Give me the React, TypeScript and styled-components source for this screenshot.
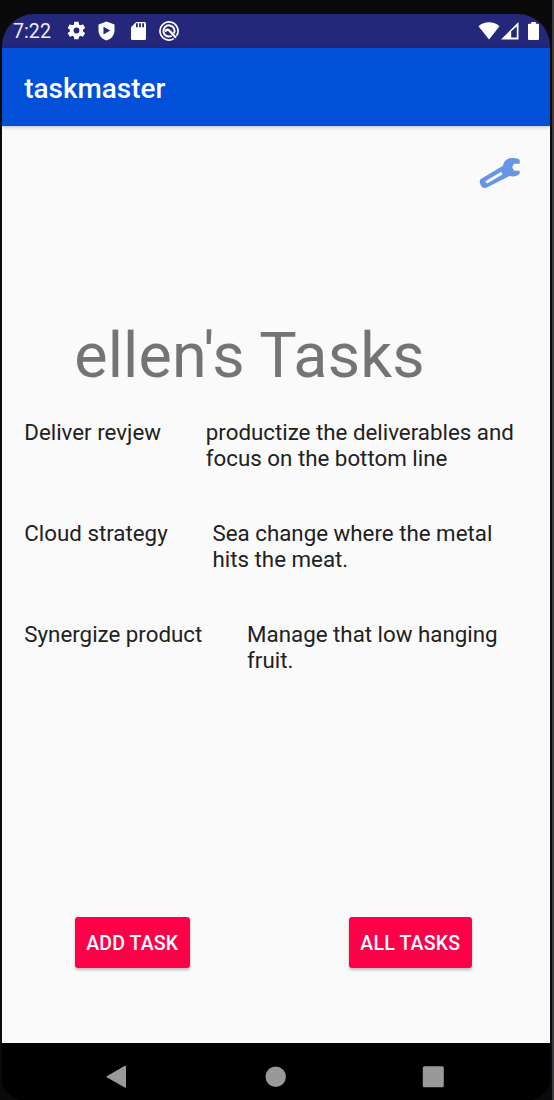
import React from "react";
import styled, { createGlobalStyle } from "styled-components";

const GlobalStyle = createGlobalStyle`
  * { box-sizing: border-box; }
  html, body { margin: 0; padding: 0; background: #0a0a0a; }
  body { font-family: Roboto, sans-serif; overflow: hidden; }
`;

const Device = styled.div`
  width: 554px;
  height: 1100px;
  padding: 14px 2px 0 2px;
  background: #0a0a0a;
  border-right: 2px solid #3b3c42;
`;

const Screen = styled.main`
  width: 548px;
  height: 1086px;
  display: flex;
  flex-direction: column;
  overflow: hidden;
  border-radius: 32px 32px 22px 22px;
  background: #000;
`;

const StatusBar = styled.header`
  height: 33.5px;
  flex: none;
  display: flex;
  align-items: center;
  justify-content: space-between;
  padding: 0 11.5px 0 11px;
  background: #24277a;
  color: #fff;
`;

const StatusGroup = styled.div`
  display: flex;
  align-items: center;
  svg { display: block; flex: none; }
`;

const Clock = styled.span`
  width: 51.5px;
  padding-top: 2px;
  font-size: 19.7px;
  line-height: 24px;
  white-space: nowrap;
  color: #eeeef6;
`;

const IconSlot = styled.span<{ $width: number }>`
  display: flex;
  justify-content: center;
  width: ${(p) => p.$width}px;
`;

const AppBar = styled.div`
  height: 78px;
  flex: none;
  position: relative;
  display: flex;
  align-items: center;
  padding: 3px 22.3px 0;
  background: #0350d8;
  box-shadow: 0 1px 4px rgba(0, 0, 0, 0.25);
`;

const AppTitle = styled.h1`
  margin: 0;
  font-size: 27.9px;
  font-weight: 500;
  line-height: 33px;
  color: #fff;
`;

const Content = styled.section`
  flex: 1;
  min-height: 0;
  display: flex;
  flex-direction: column;
  background: #fafafa;
`;

const SettingsButton = styled.button`
  align-self: flex-end;
  width: 44px;
  height: 34px;
  margin: 30.5px 28px 0 0;
  padding: 0;
  border: 0;
  background: none;
  svg { display: block; }
`;

const Heading = styled.h2`
  margin: 129px 0 0 72.2px;
  font-size: 62.8px;
  font-weight: 400;
  line-height: 74px;
  letter-spacing: 0.14px;
  color: #747474;
  white-space: nowrap;
`;

const TaskList = styled.ul`
  margin: 26px 0 0;
  padding: 0 22.3px;
  list-style: none;
`;

const TaskRow = styled.li`
  display: flex;
  gap: 44.8px;
  height: 101px;
  font-size: 22.32px;
  line-height: 26.2px;
  color: #212121;
`;

const TaskName = styled.span`
  flex: none;
`;

const TaskBody = styled.span`
  flex: 1;
`;

const Actions = styled.div`
  display: flex;
  justify-content: space-between;
  margin: auto 78px 75px 72.5px;
`;

const ActionButton = styled.button<{ $width: number }>`
  width: ${(p) => p.$width}px;
  height: 51px;
  padding: 2px 0 0;
  border: 0;
  border-radius: 3px;
  background: #ff0048;
  box-shadow: 0 2px 3px rgba(0, 0, 0, 0.25);
  color: #fff;
  font: 500 19.5px/23px Roboto, sans-serif;
  letter-spacing: 0.17px;
  white-space: nowrap;
`;

const NavBar = styled.nav`
  height: 57px;
  flex: none;
  display: flex;
  justify-content: space-between;
  align-items: center;
  padding: 10px 106px 0 104px;
  background: #000;
  svg { display: block; }
`;

const tasks = [
  { name: "Deliver revjew", body: "productize the deliverables and focus on the bottom line" },
  { name: "Cloud strategy", body: "Sea change where the metal hits the meat." },
  { name: "Synergize product", body: "Manage that low hanging fruit." },
];

const GearIcon = () => (
  <svg width="21" height="21" viewBox="0 0 24 24" fill="#fff">
    <path d="M19.400 13c0-.3.1-.6.1-1s0-.7-.1-1l2.100-1.700c.2-.1.3-.4.1-.6l-2-3.500c-.1-.2-.4-.3-.6-.2l-2.500 1c-.5-.4-1.100-.7-1.700-1l-.4-2.600c0-.2-.2-.4-.5-.4h-4c-.2 0-.4.2-.5.4l-.4 2.600c-.6.3-1.200.6-1.700 1l-2.500-1c-.2-.1-.5 0-.6.2l-2 3.500c-.1.2-.1.5.1.6l2.100 1.700c0 .3-.1.700-.1 1s0 .700.1 1l-2.100 1.700c-.2.100-.2.400-.1.600l2 3.500c.1.200.4.300.6.200l2.500-1c.5.400 1.100.700 1.700 1l.4 2.600c0 .2.200.4.500.4h4c.2 0 .500-.2.500-.4l.4-2.600c.6-.3 1.200-.6 1.700-1l2.500 1c.2.100.5 0 .6-.2l2-3.500c.1-.2.100-.5-.1-.6zM12 15.300a3.300 3.300 0 1 1 0-6.600 3.300 3.300 0 0 1 0 6.600z" />
  </svg>
);

const ShieldIcon = () => (
  <svg width="17" height="20" viewBox="0 0 17 20">
    <path d="M8.500.5 16.500 3.500v6c0 4.600-3.200 8.500-8 10-4.800-1.500-8-5.400-8-10v-6z" fill="#fff" />
    <path d="M5.500 5.700v7.800l6.700-3.900z" fill="#24277a" />
  </svg>
);

const SdCardIcon = () => (
  <svg width="15" height="18" viewBox="0 0 15 18">
    <path d="M5.200 0h8.300A1.500 1.500 0 0 1 15 1.500v15a1.500 1.500 0 0 1-1.500 1.500h-12A1.500 1.500 0 0 1 0 16.500V5.200z" fill="#fff" />
    <path d="M5 1.200h1.800v4H5zM8.100 1.200h1.800v4H8.100zM11.200 1.200H13v4h-1.800z" fill="#24277a" />
  </svg>
);

const DebugIcon = () => (
  <svg width="20" height="20" viewBox="0 0 20 20" fill="none" stroke="#fff">
    <path d="M14.800 17.600A9 9 0 1 1 17.600 14.800" strokeWidth="1.700" />
    <path d="M12.600 14.900A5.600 5.600 0 1 1 15 12.400" strokeWidth="2" />
    <path d="M6 10.500Q8.300 7.300 10.500 9.800L17 16.800" strokeWidth="2.400" />
  </svg>
);

const WifiIcon = () => (
  <svg width="22" height="18" viewBox="0 0 22 18" fill="#fff">
    <path d="M.5 4.300C6-1.200 16-1.200 21.500 4.300L11 17.500z" />
  </svg>
);

const SignalIcon = () => (
  <svg width="18" height="18" viewBox="0 0 18 18">
    <path d="M0 17.500 17.500 0v17.500z" fill="#fff" />
    <path d="M10.200 9.300 15.800 4.500v11h-5.600z" fill="#24277a" />
  </svg>
);

const BatteryIcon = () => (
  <svg width="11" height="18" viewBox="0 0 11 18" fill="#fff">
    <path d="M3.200 0h4.600v1.800H10a1 1 0 0 1 1 1V17a1 1 0 0 1-1 1H1a1 1 0 0 1-1-1V2.800a1 1 0 0 1 1-1h2.200z" />
  </svg>
);

const WrenchIcon = () => (
  <svg width="44" height="34" viewBox="0 0 44 34">
    <path d="M3.200 22.800 25 9.800C25.800 5 29 2 34 2c3 0 6.500.4 7.700 2V7.800H36L34.200 11 36 14.700h5.700v2.800C39.200 20.300 35.500 21 31.500 19.900L8.800 31.500C6.500 32.500 4.300 31.900 3.200 30L2.200 28C1.400 26 1.600 23.900 3.200 22.800z" fill="#6796e7" />
    <path d="M9.200 25.800 22.800 17.700" stroke="#fafafa" strokeWidth="3" strokeLinecap="round" />
  </svg>
);

const BackIcon = () => (
  <svg width="21" height="24" viewBox="0 0 21 24" fill="#999">
    <path d="M.8 11.300 18.800.8Q20 .3 20 1.500V22Q20 23.200 18.800 22.600L.8 12.300Q0 11.800.8 11.300z" />
  </svg>
);

const HomeIcon = () => (
  <svg width="22" height="22" viewBox="0 0 22 22" fill="#999">
    <circle cx="11.700" cy="10.700" r="10.200" />
  </svg>
);

const RecentsIcon = () => (
  <svg width="22" height="22" viewBox="0 0 22 22" fill="#999">
    <rect x=".8" y=".3" width="21" height="21" rx="1.500" />
  </svg>
);

export default function App() {
  return (
    <>
      <GlobalStyle />
      <Device>
        <Screen>
          <StatusBar>
            <StatusGroup>
              <Clock>7:22</Clock>
              <IconSlot $width={23}><GearIcon /></IconSlot>
              <IconSlot $width={38.5}><ShieldIcon /></IconSlot>
              <IconSlot $width={24}><SdCardIcon /></IconSlot>
              <IconSlot $width={38}><DebugIcon /></IconSlot>
            </StatusGroup>
            <StatusGroup>
              <IconSlot $width={22}><WifiIcon /></IconSlot>
              <IconSlot $width={20}><SignalIcon /></IconSlot>
              <IconSlot $width={8} />
              <IconSlot $width={11}><BatteryIcon /></IconSlot>
            </StatusGroup>
          </StatusBar>
          <AppBar>
            <AppTitle>taskmaster</AppTitle>
          </AppBar>
          <Content>
            <SettingsButton aria-label="Settings">
              <WrenchIcon />
            </SettingsButton>
            <Heading>ellen's Tasks</Heading>
            <TaskList>
              {tasks.map((task) => (
                <TaskRow key={task.name}>
                  <TaskName>{task.name}</TaskName>
                  <TaskBody>{task.body}</TaskBody>
                </TaskRow>
              ))}
            </TaskList>
            <Actions>
              <ActionButton $width={115.5}>ADD TASK</ActionButton>
              <ActionButton $width={123.5}>ALL TASKS</ActionButton>
            </Actions>
          </Content>
          <NavBar>
            <BackIcon />
            <HomeIcon />
            <RecentsIcon />
          </NavBar>
        </Screen>
      </Device>
    </>
  );
}
